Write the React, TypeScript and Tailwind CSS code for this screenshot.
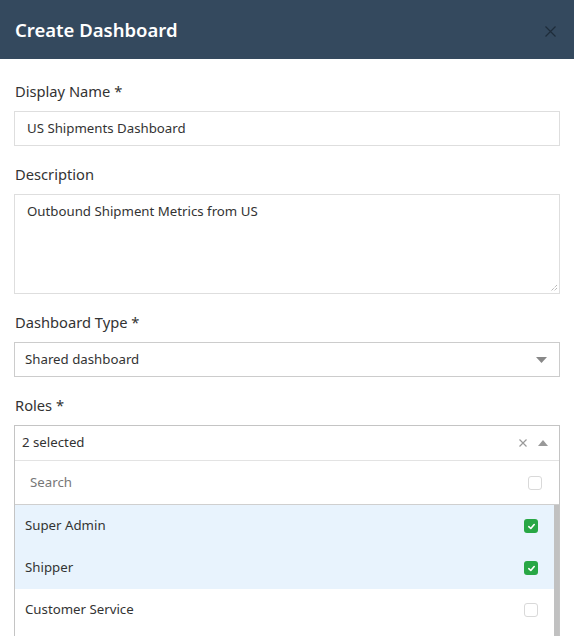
import React from "react";

const font = { fontFamily: '"Segoe UI", "Noto Sans", "Open Sans", sans-serif' };

function Check({ checked }: { checked: boolean }) {
  if (checked) {
    return (
      <span className="flex h-[14px] w-[14px] items-center justify-center rounded-[3px] bg-[#28a745]">
        <svg width="9" height="9" viewBox="0 0 10 10">
          <path d="M2 5.2 L4.2 7.2 L8 2.8" fill="none" stroke="white" strokeWidth="1.8" strokeLinecap="round" strokeLinejoin="round" />
        </svg>
      </span>
    );
  }
  return <span className="block h-[14px] w-[14px] rounded-[3px] border border-[#d9d9d9] bg-white" />;
}

export default function App() {
  const items = [
    { name: "Super Admin", checked: true },
    { name: "Shipper", checked: true },
    { name: "Customer Service", checked: false },
  ];
  return (
    <div className="h-[636px] w-[574px] overflow-hidden bg-white text-[#333]" style={font}>
      <div className="flex h-[59px] items-center justify-between bg-[#34495e] pl-[15px] pr-[18px]">
        <h1 className="text-[18.5px] font-semibold text-white">Create Dashboard</h1>
        <svg className="mt-[4px]" width="11" height="11" viewBox="0 0 11 11">
          <path d="M0.5 0.5 L10.5 10.5 M10.5 0.5 L0.5 10.5" stroke="#1e2c3a" strokeWidth="1.2" />
        </svg>
      </div>
      <div className="flex flex-col px-[14px] pt-[22px]">
        <label className="h-[20px] pl-[1px] text-[14.7px] leading-[20px]">Display Name *</label>
        <div className="mt-[10px] flex h-[35px] w-[546px] items-center border border-[#dedede] pl-[12px] text-[13.25px]">
          US Shipments Dashboard
        </div>
        <label className="mt-[18px] h-[20px] pl-[1px] text-[14.7px] leading-[20px]">Description</label>
        <div className="relative mt-[10px] h-[100px] w-[546px] border border-[#dedede] pl-[12px] pt-[7px] text-[13.25px]">
          Outbound Shipment Metrics from US
          <svg className="absolute bottom-[1px] right-[1px]" width="9" height="9" viewBox="0 0 9 9">
            <path d="M8 2 L2 8 M8 5 L5 8" stroke="#999" strokeWidth="1" strokeDasharray="1 1" />
          </svg>
        </div>
        <label className="mt-[18px] h-[20px] pl-[1px] text-[14.7px] leading-[20px]">Dashboard Type *</label>
        <div className="mt-[10px] flex h-[35px] w-[546px] items-center justify-between border border-[#cccccc] pl-[10px] pr-[12px] text-[13.25px]">
          <span>Shared dashboard</span>
          <svg width="11" height="6" viewBox="0 0 11 6">
            <path d="M0 0 L11 0 L5.5 6 Z" fill="#888" />
          </svg>
        </div>
        <label className="mt-[18px] h-[20px] pl-[1px] text-[14.7px] leading-[20px]">Roles *</label>
        <div className="mt-[10px] w-[546px] border border-[#c4c4c4] border-b-0">
          <div className="flex h-[35px] items-center justify-between border-b border-[#e3e3e3] pl-[7px] pr-[11px] text-[13.25px]">
            <span>2 selected</span>
            <div className="flex items-center gap-[11px]">
              <svg width="8" height="8" viewBox="0 0 8 8">
                <path d="M0.5 0.5 L7.5 7.5 M7.5 0.5 L0.5 7.5" stroke="#999" strokeWidth="1.2" />
              </svg>
              <svg width="10" height="6" viewBox="0 0 10 6">
                <path d="M0 6 L10 6 L5 0 Z" fill="#999" />
              </svg>
            </div>
          </div>
          <div className="flex h-[44px] items-center justify-between border-b border-[#cfcfcf] pl-[15px] pr-[17px] text-[13.25px]">
            <span className="text-[#777]">Search</span>
            <Check checked={false} />
          </div>
          <div className="flex">
            <div className="flex-1">
              {items.map((it) => (
                <div
                  key={it.name}
                  className={`flex h-[42px] items-center justify-between pl-[10px] pr-[16px] text-[13.25px] ${it.checked ? "bg-[#e8f3fd]" : "bg-white"}`}
                >
                  <span>{it.name}</span>
                  <Check checked={it.checked} />
                </div>
              ))}
              <div className="h-[20px]" />
            </div>
            <div className="w-[5px] bg-[#c1c1c1]" />
          </div>
        </div>
      </div>
    </div>
  );
}
